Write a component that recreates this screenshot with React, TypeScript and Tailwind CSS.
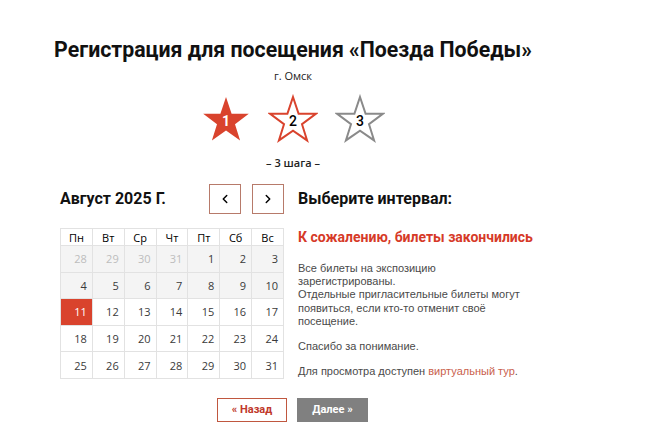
import React from "react";
import { ChevronLeft, ChevronRight } from "lucide-react";

const STAR = "25,2 30.6,18.8 47.8,18.8 34,29.2 39.1,45.4 25,35.6 10.9,45.4 16,29.2 2.2,18.8 19.4,18.8";

function Star({ n, variant }: { n: number; variant: "done" | "active" | "idle" }) {
  const fill = variant === "done" ? "#d9432d" : "#ffffff";
  const stroke = variant === "idle" ? "#8a8a8a" : "#d9432d";
  return (
    <div className="relative h-[50px] w-[50px]">
      <svg viewBox="0 0 50 48" className="h-[50px] w-[50px]">
        <polygon points={STAR} fill={fill} stroke={stroke} strokeWidth={variant === "done" ? 0 : 2} strokeLinejoin="miter" />
      </svg>
      <span
        className={`absolute inset-x-0 top-[20px] text-center font-['Roboto',sans-serif] text-[14px] leading-none ${
          variant === "done" ? "font-bold text-white" : "font-medium text-black"
        }`}
      >
        {n}
      </span>
    </div>
  );
}

const days = ["Пн", "Вт", "Ср", "Чт", "Пт", "Сб", "Вс"];
const weeks: { d: number; muted?: boolean }[][] = [
  [{ d: 28, muted: true }, { d: 29, muted: true }, { d: 30, muted: true }, { d: 31, muted: true }, { d: 1 }, { d: 2 }, { d: 3 }],
  [4, 5, 6, 7, 8, 9, 10].map((d) => ({ d })),
  [11, 12, 13, 14, 15, 16, 17].map((d) => ({ d })),
  [18, 19, 20, 21, 22, 23, 24].map((d) => ({ d })),
  [25, 26, 27, 28, 29, 30, 31].map((d) => ({ d })),
];

export default function App() {
  return (
    <div className="min-h-[443px] w-[656px] bg-white font-['Open_Sans','Liberation_Sans',sans-serif] text-[#222]">
      <div className="flex w-[586px] flex-col items-center pt-[36px]">
        <h1 className="font-['Roboto','Liberation_Sans',sans-serif] text-[21.3px] font-bold leading-[28px] text-[#111]">
          Регистрация для посещения «Поезда Победы»
        </h1>
        <p className="mt-[5px] text-[11px] leading-[14px] text-[#222]">г. Омск</p>
        <div className="mt-[11px] flex gap-[17px]">
          <Star n={1} variant="done" />
          <Star n={2} variant="active" />
          <Star n={3} variant="idle" />
        </div>
        <p className="mt-[12px] text-[11px] font-semibold leading-[14px]">– 3 шага –</p>
      </div>

      <div className="ml-[60px] mt-[14px] flex gap-[14px]">
        <div className="w-[224px]">
          <div className="flex h-[30px] items-center">
            <span className="w-[149px] font-['Roboto','Liberation_Sans',sans-serif] text-[16px] font-bold text-[#111]">
              Август 2025 Г.
            </span>
            <button className="flex h-[30px] w-[32px] items-center justify-center border border-[#b77a6a] text-black">
              <ChevronLeft size={14} strokeWidth={2.5} />
            </button>
            <button className="ml-[11px] flex h-[30px] w-[32px] items-center justify-center border border-[#b77a6a] text-black">
              <ChevronRight size={14} strokeWidth={2.5} />
            </button>
          </div>
          <table className="mt-[14px] w-[224px] table-fixed border-collapse">
            <thead>
              <tr className="h-[17px]">
                {days.map((d) => (
                  <th key={d} className="border border-[#e2e2e2] p-0 text-center text-[11px] font-normal leading-[15px] text-black">
                    {d}
                  </th>
                ))}
              </tr>
            </thead>
            <tbody>
              {weeks.map((w, i) => (
                <tr key={i} className="h-[26.6px]">
                  {w.map((c) => {
                    const sel = c.d === 11 && !c.muted;
                    return (
                      <td
                        key={c.d}
                        className={`border border-[#e2e2e2] px-[5px] pt-[1px] text-right align-middle text-[11px] leading-[14px] ${
                          sel ? "bg-[#d9432d] text-white" : i < 2 ? "bg-[#f4f4f4]" : "bg-white"
                        } ${c.muted ? "text-[#bdbdbd]" : sel ? "" : "text-[#3a3a3a]"}`}
                      >
                        {c.d}
                      </td>
                    );
                  })}
                </tr>
              ))}
            </tbody>
          </table>
        </div>

        <div className="w-[236px]">
          <div className="flex h-[30px] items-center font-['Roboto','Liberation_Sans',sans-serif] text-[16px] font-bold text-[#111]">
            Выберите интервал:
          </div>
          <p className="mt-[14px] whitespace-nowrap font-['Roboto','Liberation_Sans',sans-serif] text-[14px] font-bold leading-[18px] text-[#d63a28]">
            К сожалению, билеты закончились
          </p>
          <div className="mt-[16px] w-[228px] font-['Liberation_Sans',sans-serif] text-[11px] leading-[13.2px] text-[#4a4a4a]">
            <p>
              Все билеты на экспозицию
              <br />
              зарегистрированы.
              <br />
              Отдельные пригласительные билеты могут появиться, если кто-то отменит своё посещение.
            </p>
            <p className="mt-[12px]">Спасибо за понимание.</p>
            <p className="mt-[12px]">
              Для просмотра доступен <span className="text-[#c9614d]">виртуальный тур</span>.
            </p>
          </div>
        </div>
      </div>

      <div className="ml-[217px] mt-[19px] flex gap-[10px]">
        <button className="h-[24px] w-[70px] border border-[#c0573f] bg-white font-['Roboto',sans-serif] text-[11px] font-bold text-[#c0392b]">
          « Назад
        </button>
        <button className="h-[24px] w-[71px] bg-[#808080] font-['Roboto',sans-serif] text-[11px] font-bold text-white">
          Далее »
        </button>
      </div>
    </div>
  );
}
